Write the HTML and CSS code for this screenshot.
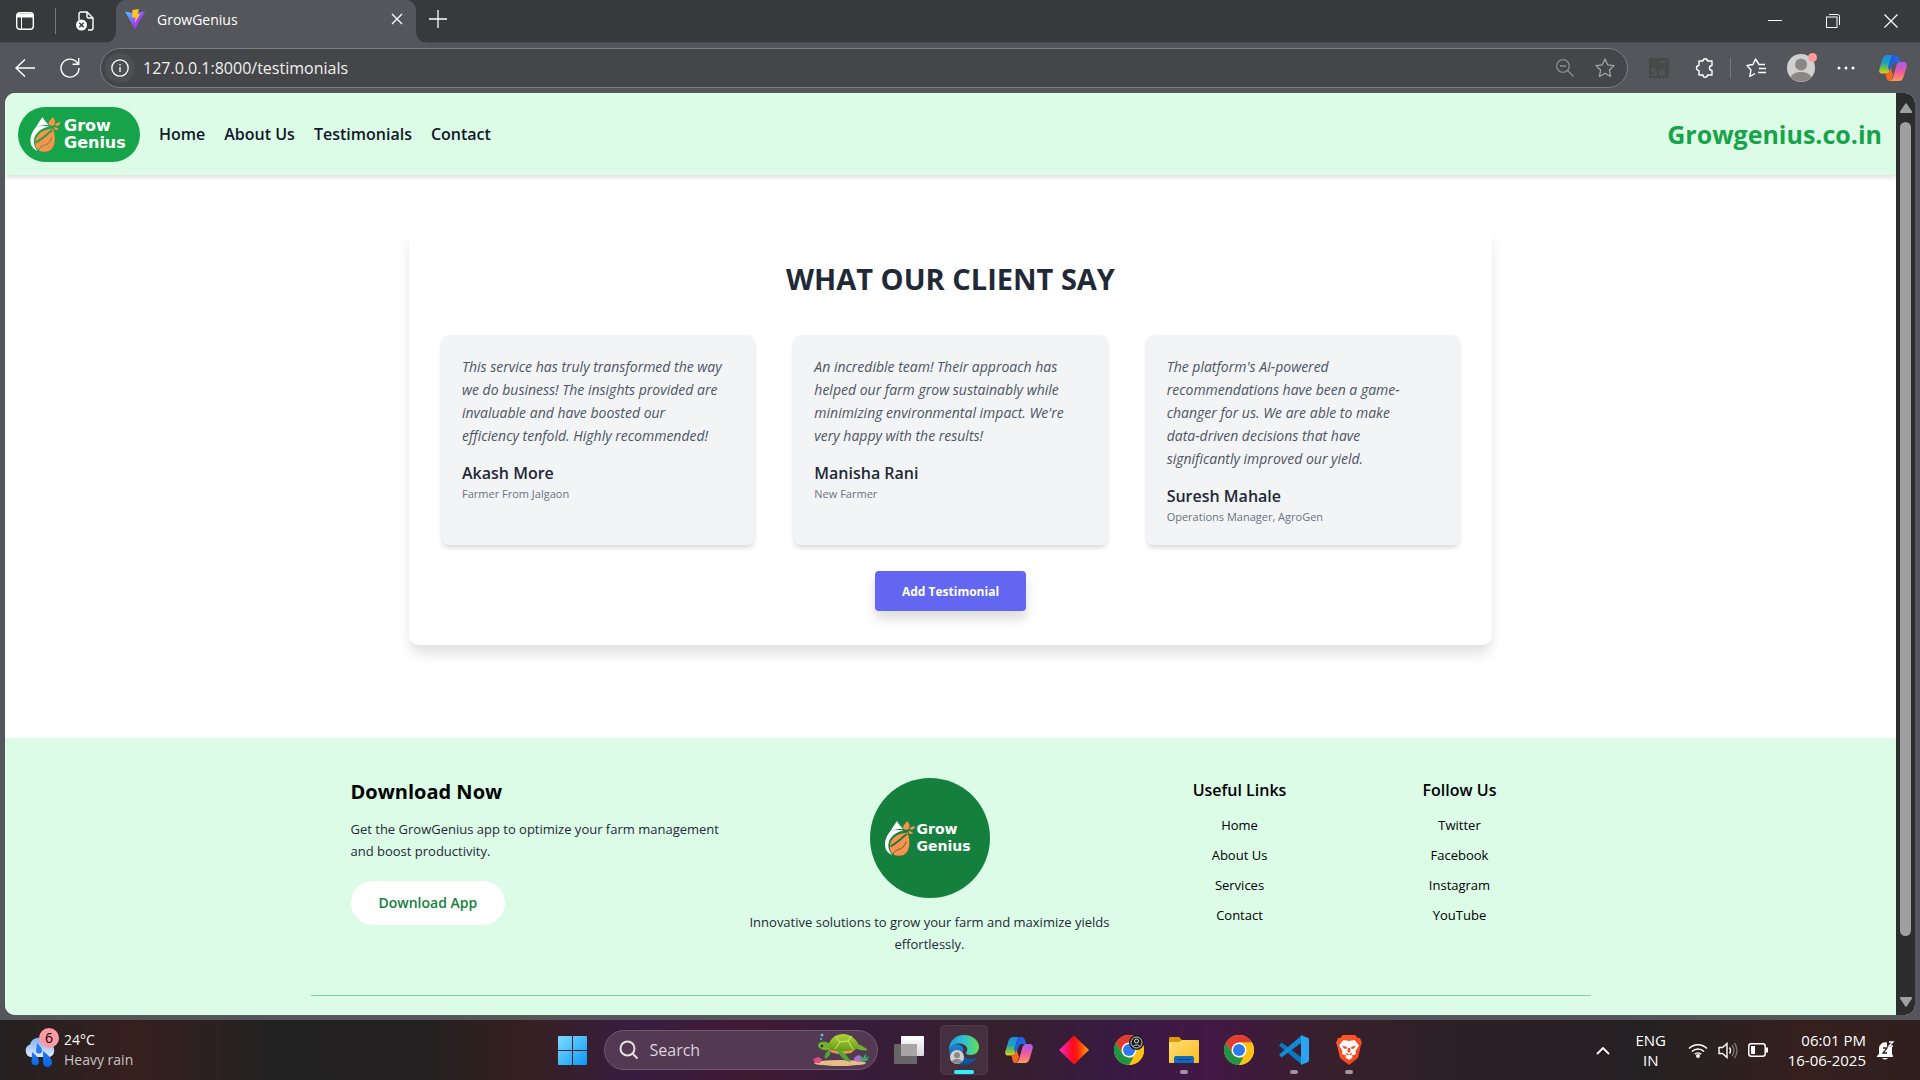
FILE: index.html
```html
<!DOCTYPE html>
<html lang="en">
<head>
<meta charset="utf-8">
<title>GrowGenius</title>
<link rel="stylesheet" href="styles.css">
</head>
<body>
<svg class="defs" aria-hidden="true">
  <defs>
    <linearGradient id="vite-a" x1="0" y1="0" x2="1" y2="1"><stop offset="0" stop-color="#41d1ff"/><stop offset=".6" stop-color="#a23bff"/><stop offset="1" stop-color="#bd34fe"/></linearGradient>
    <linearGradient id="cp-a" x1="0" y1="0" x2="0" y2="1"><stop offset="0" stop-color="#1a8be8"/><stop offset=".45" stop-color="#22a3b8"/><stop offset=".75" stop-color="#7cc43c"/><stop offset="1" stop-color="#f5c518"/></linearGradient>
    <linearGradient id="cp-b" x1="0" y1="0" x2="0" y2="1"><stop offset="0" stop-color="#a55cf6"/><stop offset=".5" stop-color="#ec5aa0"/><stop offset="1" stop-color="#ff9a5a"/></linearGradient>
    <linearGradient id="cp-c" x1="0" y1="0" x2="1" y2="1"><stop offset="0" stop-color="#1b4ed8"/><stop offset="1" stop-color="#2b7de9"/></linearGradient>
    <linearGradient id="win" x1="0" y1="0" x2="1" y2="1"><stop offset="0" stop-color="#7fdcff"/><stop offset="1" stop-color="#0a97f5"/></linearGradient>
    <linearGradient id="edge-a" x1="0" y1="0" x2="1" y2="0"><stop offset="0" stop-color="#1c9be0"/><stop offset=".5" stop-color="#2fc3cf"/><stop offset="1" stop-color="#63e04c"/></linearGradient>
    <linearGradient id="edge-b" x1="0" y1="0" x2="0" y2="1"><stop offset="0" stop-color="#1b88d8"/><stop offset="1" stop-color="#0d4a93"/></linearGradient>
    <linearGradient id="red" x1="0" y1="0" x2="1" y2="0"><stop offset="0" stop-color="#f02bd0"/><stop offset=".45" stop-color="#ff0a1c"/><stop offset=".6" stop-color="#ff1a10"/><stop offset="1" stop-color="#ffa800"/></linearGradient>
    <linearGradient id="fold" x1="0" y1="0" x2="1" y2="1"><stop offset="0" stop-color="#ffdf73"/><stop offset="1" stop-color="#fbbc1e"/></linearGradient>
    <linearGradient id="cloud" x1="0" y1="0" x2="0" y2="1"><stop offset="0" stop-color="#7fb2f5"/><stop offset="1" stop-color="#dfe8f8"/></linearGradient>
    <linearGradient id="drop" x1="0" y1="0" x2="0" y2="1"><stop offset="0" stop-color="#2f86f5"/><stop offset="1" stop-color="#0a64e8"/></linearGradient>
    <linearGradient id="tv" x1="0" y1="0" x2="0" y2="1"><stop offset="0" stop-color="#ffffff"/><stop offset="1" stop-color="#d8d8d8"/></linearGradient>
    <linearGradient id="brave" x1="0" y1="0" x2="1" y2="1"><stop offset="0" stop-color="#ff5a2a"/><stop offset="1" stop-color="#f2401c"/></linearGradient>
    <linearGradient id="shell" x1="0" y1="0" x2="0" y2="1"><stop offset="0" stop-color="#b3d334"/><stop offset="1" stop-color="#5f9a1d"/></linearGradient>
  </defs>
  <symbol id="mark" viewBox="0 0 30 35">
    <path fill="#fff" d="M12 0c1.500 3 4 5.500 6 8-5 0-9 .6-12.500 2.500C7 6.500 10 3.500 12 0z"/>
    <path fill="#fff" d="M5.500 10C1.500 15 0 19 0 23.500 0 28.500 2.500 32 7 34 3 29 2 23 5.500 17.500 8.500 13 13 10.500 19 9.500 14 8.500 9 9 5.500 10z"/>
    <path fill="#ff914d" d="M22.500 11.500C26 22 25 34.500 14 34.800c-4 .1-7-1.800-8.700-4.800C3 20 9 12.500 22.500 11.500z"/>
    <path fill="none" stroke="currentColor" stroke-width="2" d="M5.500 25.500C9 23 12 21.500 14 19.500c3-2.500 5-4.500 8-6.500"/>
    <path fill="none" stroke="currentColor" stroke-width="1" d="M8 33c2-4 5-4 8-5.500 3-1.500 4-4 5-7"/>
    <path fill="#ff914d" d="M18 7c0-3 2.500-4 4-7 2.500 2.500 3.500 5 1.500 8-1.500 1.500-4 1-5.500-1zM24.500 8.500C25.500 5.500 27 5.500 30 5.200c-.5 2.800-2.500 4.300-5.500 3.300zM23 10.500c2.500-.5 4 0 5 2-2 1-4 .5-5-2z"/>
  </symbol>
  <symbol id="copilot" viewBox="0 0 28 26">
    <path fill="url(#cp-a)" d="M8 0h9c-2 1-3 3-4 7l-2.500 9c-.8 2-2 2.500-3.500 2.500H3C1 18.500-.3 17 .3 14.500L3.500 4C4.300 1.500 5.800 0 8 0z"/>
    <path fill="url(#cp-c)" d="M13 0h3.500C19 0 20 2 21 7h-3.500C15.500 7 14 8 13.300 10L11 18l-2-6 2.500-8z"/>
    <path fill="url(#cp-b)" d="M20 26h-9c2-1 3-3 4-7l2.500-9c.8-2 2-3 3.500-3h4c2 0 3.300 2 2.700 4.500L24.500 22c-.8 2.500-2.300 4-4.500 4z"/>
    <path fill="#f7681f" d="M7 18.500c1.700 0 2.800-.6 3.500-2.500l1-3.500L14 20c-1 4-2 6-4 6-2.500 0-2.500-4-3.500-7.500z"/>
  </symbol>
  <symbol id="chrome" viewBox="0 0 30 30">
    <circle cx="15" cy="15" r="15" fill="#fbc116"/>
    <path fill="#e33b2e" d="M15 0a15 15 0 0 1 13 7.500H15L8.500 18.800 2 7.500A15 15 0 0 1 15 0z"/>
    <path fill="#229342" d="M2 7.500l6.500 11.300L15 22.500h6.500L15 30A15 15 0 0 1 2 7.500z"/>
    <path fill="#fbc116" d="M15 7.500h13A15 15 0 0 1 15 30l6.500-11.300z"/>
    <circle cx="15" cy="15" r="7.500" fill="#fff"/><circle cx="15" cy="15" r="6" fill="#2f7bea"/>
  </symbol>
  <symbol id="person" viewBox="0 0 28 28">
    <circle cx="14" cy="14" r="14" fill="#d2d0ce"/><circle cx="14" cy="10.500" r="6" fill="#8a8886"/>
    <path fill="#8a8886" d="M3.500 23C6 19 10 18 14 18s8 1 10.500 5A14 14 0 0 1 3.500 23z"/>
  </symbol>
</svg>

<header class="tabstrip">
  <button class="chrome-btn" aria-label="Tab actions"><svg width="18" height="18" viewBox="0 0 18 18" fill="none" stroke="#fff"><rect x=".7" y=".7" width="16.600" height="16.600" rx="3" stroke-width="1.400"/><path d="M1 3.500h16" stroke-width="4"/><path d="M5.500 5v12"/></svg></button>
  <span class="strip-rule"></span>
  <button class="chrome-btn" aria-label="Workspaces"><svg width="18" height="20" viewBox="0 0 18 20"><path d="M3 9V3a2 2 0 0 1 2-2h6l6 6v10a2 2 0 0 1-2 2h-3M11 1v4.500A1.500 1.500 0 0 0 12.500 7H17" fill="none" stroke="#fff" stroke-width="1.400"/><circle cx="5.500" cy="14" r="5.500" fill="#fff"/><path d="M3.300 11.800l4.400 4.400m0-4.400l-4.400 4.400" stroke="#38393d" stroke-width="1.500"/></svg></button>
  <div class="tab">
    <svg width="20" height="20" viewBox="0 0 20 20"><path fill="url(#vite-a)" d="M0 2.500L8 4l12-1.500L10 20z"/><path fill="#ffc61f" d="M7.500 1L14 0l-1.500 5H15L10 14l.5-5.500H7z"/></svg>
    <span class="tab-title">GrowGenius</span>
    <button class="chrome-btn close" aria-label="Close tab"><svg width="12" height="12" viewBox="0 0 12 12"><path d="M1 1l10 10M11 1L1 11" stroke="#fff" stroke-width="1.300"/></svg></button>
  </div>
  <button class="chrome-btn plus" aria-label="New tab"><svg width="18" height="18" viewBox="0 0 18 18"><path d="M9 0v18M0 9h18" stroke="#fff" stroke-width="1.300"/></svg></button>
  <div class="window-controls">
    <button class="chrome-btn" aria-label="Minimize"><svg width="14" height="14" viewBox="0 0 14 14"><path d="M0 6.500h14" stroke="#fff"/></svg></button>
    <button class="chrome-btn" aria-label="Restore"><svg width="14" height="14" viewBox="0 0 14 14" fill="none" stroke="#fff"><rect x=".5" y="3" width="10.500" height="10.500"/><path d="M3 .5h8.500a2 2 0 0 1 2 2V11"/></svg></button>
    <button class="chrome-btn" aria-label="Close"><svg width="14" height="14" viewBox="0 0 14 14"><path d="M.5.500l13 13M13.500.500l-13 13" stroke="#fff" stroke-width="1.200"/></svg></button>
  </div>
</header>

<div class="toolbar">
  <button class="chrome-btn" aria-label="Back"><svg width="20" height="18" viewBox="0 0 20 18" fill="none" stroke="#fff" stroke-width="1.400"><path d="M20 9H1M10 .5L1 9l9 8.500"/></svg></button>
  <button class="chrome-btn" aria-label="Refresh"><svg width="20" height="20" viewBox="0 0 20 20" fill="none" stroke="#fff" stroke-width="1.400"><path d="M19 10A9 9 0 1 1 15.500 3L18.500 6M18.700 0v6.200H12.500"/></svg></button>
  <div class="address">
    <span class="site-info"><svg width="18" height="18" viewBox="0 0 18 18" fill="none" stroke="#fff" stroke-width="1.300"><circle cx="9" cy="9" r="8.200"/><path d="M9 8v5M9 5v1.500"/></svg></span>
    <input class="url" aria-label="Address" value="127.0.0.1:8000/testimonials">
    <button class="chrome-btn" aria-label="Zoom"><svg width="18" height="18" viewBox="0 0 18 18" fill="none" stroke="#8c8d90" stroke-width="1.300"><circle cx="7" cy="7" r="6.300"/><path d="M11.500 11.500L17.500 17.500M4 7h6"/></svg></button>
    <button class="chrome-btn" aria-label="Add to favourites"><svg width="20" height="20" viewBox="0 0 20 20" fill="none" stroke="#a3a4a7" stroke-width="1.300" stroke-linejoin="round"><path d="M10 1l2.700 5.800 6.300.8-4.600 4.400 1.200 6.500L10 15.300 4.400 18.500 5.600 12 1 7.600l6.300-.8z"/></svg></button>
  </div>
  <div class="extensions">
    <button class="chrome-btn" aria-label="Selenium"><svg width="20" height="20" viewBox="0 0 20 20"><path fill="#494949" d="M0 0h20v20H0z"/><path fill="none" stroke="#5d5f66" d="M11 4h6M7 11H3v3h4v3H2M10 15h5v-3h-4v5h5"/></svg></button>
    <button class="chrome-btn" aria-label="Extensions"><svg width="20" height="20" viewBox="0 0 20 20" fill="none" stroke="#fff" stroke-width="1.400" stroke-linejoin="round"><path d="M4 3h4a2.200 2.200 0 0 1 4.400 0H17v4.500a2.300 2.300 0 0 0 0 5V17h-4.600a2.200 2.200 0 0 1-4.400 0H4v-4.500a2.500 2.500 0 0 1 0-5z"/></svg></button>
    <span class="strip-rule short"></span>
    <button class="chrome-btn" aria-label="Favourites"><svg width="20" height="20" viewBox="0 0 20 20" fill="none" stroke="#fff" stroke-width="1.400" stroke-linejoin="round"><path d="M19 6.500h-6L9.500 1 7 6.500l-6 1L5 12l-1.200 6.500L9 15.500M13 10.500h7M12 14.500h8"/></svg></button>
    <button class="chrome-btn avatar" aria-label="Profile"><svg width="28" height="28"><use href="#person"/></svg><span class="avatar-dot"></span></button>
    <button class="chrome-btn" aria-label="More"><svg width="18" height="4" viewBox="0 0 18 4" fill="#fff"><circle cx="2" cy="2" r="1.500"/><circle cx="9" cy="2" r="1.500"/><circle cx="16" cy="2" r="1.500"/></svg></button>
    <button class="chrome-btn copilot" aria-label="Copilot"><svg width="28" height="26"><use href="#copilot"/></svg></button>
  </div>
</div>

<div class="viewport">
  <div class="site">
    <nav class="navbar">
      <a class="logo-pill" href="#"><svg width="35" height="35"><use href="#mark"/></svg><span class="logo-text">Grow<br>Genius</span></a>
      <a href="#">Home</a><a href="#">About Us</a><a href="#">Testimonials</a><a href="#">Contact</a>
      <a class="brand" href="#">Growgenius.co.in</a>
    </nav>
    <main class="main">
      <section class="panel">
        <h1>WHAT OUR CLIENT SAY</h1>
        <div class="cards">
          <article class="card">
            <p class="quote">This service has truly transformed the way we do business! The insights provided are invaluable and have boosted our <span class="keep">efficiency tenfold.</span> Highly recommended!</p>
            <h2>Akash More</h2><p class="role">Farmer From Jalgaon</p>
          </article>
          <article class="card">
            <p class="quote">An incredible team! Their approach has helped our farm grow sustainably while minimizing environmental impact. We're very happy with the results!</p>
            <h2>Manisha Rani</h2><p class="role">New Farmer</p>
          </article>
          <article class="card">
            <p class="quote">The platform's AI-powered recommendations have been a game-changer for us. We are able to make <span class="keep">data-driven</span> decisions that have <span class="keep">significantly improved</span> our yield.</p>
            <h2>Suresh Mahale</h2><p class="role">Operations Manager, AgroGen</p>
          </article>
        </div>
        <button class="add">Add Testimonial</button>
      </section>
    </main>
    <footer class="footer">
      <div class="footer-grid">
        <div class="download">
          <h2>Download Now</h2>
          <p>Get the GrowGenius app to optimize your farm management and boost productivity.</p>
          <button class="download-btn">Download App</button>
        </div>
        <div class="about">
          <div class="logo-circle"><svg width="30" height="35"><use href="#mark"/></svg><span class="logo-text">Grow<br>Genius</span></div>
          <p>Innovative solutions to grow your farm and maximize yields effortlessly.</p>
        </div>
        <div class="links"><h3>Useful Links</h3><a href="#">Home</a><a href="#">About Us</a><a href="#">Services</a><a href="#">Contact</a></div>
        <div class="links"><h3>Follow Us</h3><a href="#">Twitter</a><a href="#">Facebook</a><a href="#">Instagram</a><a href="#">YouTube</a></div>
      </div>
    </footer>
  </div>
  <div class="scrollbar">
    <svg width="14" height="11" viewBox="0 0 14 11"><path fill="#9f9f9f" d="M6 1q1-1.500 2 0l5 7.500q.7 1.500-1 1.500H2q-1.700 0-1-1.500z"/></svg>
    <div class="track"><div class="thumb"></div></div>
    <svg width="14" height="11" viewBox="0 0 14 11"><path fill="#9f9f9f" d="M6 10q1 1.500 2 0l5-7.500q.7-1.500-1-1.500H2q-1.700 0-1 1.500z"/></svg>
  </div>
</div>

<div class="taskbar">
  <div class="weather">
    <div class="weather-icon">
      <svg width="32" height="34" viewBox="0 0 32 34"><path fill="url(#cloud)" d="M7 22a6.500 6.500 0 0 1-1-12.500A9.500 9.500 0 0 1 23 7a8 8 0 0 1 3 15z"/><path fill="url(#drop)" d="M13 8c3 3 5 5 5 7.500a3 3 0 0 1-6 0zM8 17c4 3 7 6 7 10a3.800 3.800 0 0 1-7.500 0zM19 16c5 4 9 7 9 11.500a4.500 4.500 0 0 1-9 0z"/></svg>
      <span class="badge">6</span>
    </div>
    <div class="weather-text"><span>24°C</span><span class="muted">Heavy rain</span></div>
  </div>
  <div class="apps">
    <button class="app" aria-label="Start"><svg width="29" height="29" viewBox="0 0 29 29" fill="url(#win)"><path d="M1 0h13v14H0V1a1 1 0 0 1 1-1zM15 0h13a1 1 0 0 1 1 1v13H15zM0 15h14v14H1a1 1 0 0 1-1-1zM15 15h14v13a1 1 0 0 1-1 1H15z"/></svg></button>
    <label class="search">
      <svg width="20" height="20" viewBox="0 0 20 20" fill="none" stroke="#e6dfe4" stroke-width="2"><circle cx="8.500" cy="8.500" r="7"/><path d="M13.500 13.500l5 5"/></svg>
      <input placeholder="Search" aria-label="Search">
      <svg width="56" height="34" viewBox="0 0 56 34">
        <ellipse cx="27" cy="30" rx="26" ry="3" fill="#e6bd86"/>
        <path fill="#6fb32c" d="M5 13c0-4 4-5 8-4 3 1 5 4 4 7-3 2-9 2-12-3zM44 11c5 1 8 4 11 6-4 1-9 0-13-2z"/>
        <path fill="#e89a3a" d="M14 15c8 4 20 4 30 0l-6 5c-8 2-16 1-20-1z"/>
        <path fill="url(#shell)" d="M14 14C18 4 24 1 30 1c8 0 14 6 17 13-8 5-24 6-33 0z"/>
        <path fill="none" stroke="#d8e66a" d="M22 3l5 6 8-1 5 8M27 9l-5 7M35 8l4-5"/>
        <path fill="#4fa53a" d="M24 16c6 2 11 7 14 13-6-1-12-5-14-13zM16 17c3 1 2 6-4 9-1-4 1-7 4-9z"/>
        <circle cx="9" cy="13" r="1.200" fill="#222"/><circle cx="9" cy="2" r="1.500" fill="#5ab8e8"/><circle cx="8" cy="6" r="1" fill="#5ab8e8"/>
        <path fill="#e04a86" d="M0 26l3-1 2-1 4 2-2 4H2z"/><path fill="#b06ad0" d="M41 25l4-3 4 2 1 4-5 1-4-2z"/><path fill="#36a868" d="M48 28l-1-6 3 3 3-5v5l3-2-2 5z"/>
      </svg>
    </label>
    <button class="app" aria-label="Task view"><svg width="30" height="28" viewBox="0 0 30 28"><rect y="8" width="23" height="20" rx="1" fill="#666"/><rect x="7" width="23" height="20" rx="1" fill="url(#tv)"/><path fill="#a9a4a6" d="M7 8h16v12H7z"/></svg></button>
    <button class="app active" aria-label="Edge"><svg width="30" height="30" viewBox="0 0 30 30"><path fill="url(#edge-b)" d="M0 15C0 10 6 8 11 10c3 1.500 4 4 3 6-2 4 2 8 7 8 3 0 5-1 7-2-3 5-8 8-13 8C6 30 0 23 0 15z"/><path fill="url(#edge-a)" d="M0 14C0 6 7 0 15 0c9 0 15 6 15 12 0 5-4 8-8 8-3 0-5-1-5-2 0-1 2-2 1-5C16 8 5 6 0 14z"/><g transform="translate(1 15) scale(.5)"><use href="#person" width="28" height="28"/></g></svg><span class="run on"></span></button>
    <button class="app" aria-label="Copilot"><svg width="28" height="26"><use href="#copilot"/></svg></button>
    <button class="app" aria-label="Diamond"><svg width="30" height="30" viewBox="0 0 30 30"><path fill="url(#red)" d="M15 0.500L30 15 15 29.500 0 15z"/></svg></button>
    <button class="app" aria-label="Chrome profile"><svg width="30" height="30" viewBox="0 0 30 30"><use href="#chrome"/><circle cx="22.500" cy="7.500" r="7.500" fill="#1c1c1c"/><circle cx="22.500" cy="7.500" r="5.500" fill="none" stroke="#ccc"/><circle cx="22.500" cy="6" r="2" fill="none" stroke="#ddd"/><path d="M19 11.500c1-2 6-2 7 0" fill="none" stroke="#ddd"/></svg></button>
    <button class="app" aria-label="File Explorer"><svg width="30" height="26" viewBox="0 0 30 26"><path fill="#dc9a06" d="M0 1a1 1 0 0 1 1-1h9l3 3h13v6H0z"/><path fill="url(#fold)" d="M0 5h10l3-2h16a1 1 0 0 1 1 1v21a1 1 0 0 1-1 1H1a1 1 0 0 1-1-1z"/><path fill="#0f6cbd" d="M5 26v-5a2 2 0 0 1 2-2h16a2 2 0 0 1 2 2v5z"/><path stroke="#0a3f78" d="M8 22.500h14"/></svg><span class="run"></span></button>
    <button class="app" aria-label="Chrome"><svg width="30" height="30"><use href="#chrome"/></svg></button>
    <button class="app" aria-label="Visual Studio Code"><svg width="30" height="30" viewBox="0 0 30 30"><path fill="#0b78c4" d="M22 22v7L0 10.500 2.500 7.500z"/><path fill="#1389d8" d="M0 19.500L22 1v7L2.500 22.500z"/><path fill="#2ba4f2" d="M22 0l7 3a1.500 1.500 0 0 1 1 1.500v21a1.500 1.500 0 0 1-1 1.500l-7 3z"/></svg><span class="run"></span></button>
    <button class="app" aria-label="Brave"><svg width="26" height="30" viewBox="0 0 26 30"><path fill="url(#brave)" d="M7 0h12l3 3 2 0 2 5-1 2-3 13-9 7-9-7L1 10 0 8l2-5h2z"/><path fill="#fff" d="M7.500 5l5.500 1 5.500-1L23 10.500 19.500 16l.5 3-4 1.500.5 2L13 25l-3.500-2.500.5-2L6 19l.5-3L3 10.500z"/><path fill="#f4481f" d="M6 10.500l5 1.500-.5 2-2.500-.5zM20 10.500L15 12l.5 2 2.500-.5zM12 13h2l.6 3.500L13 18l-1.600-1.500zM9.500 17.500L13 19.500l3.500-2-1.500 3-2-1-2 1z"/></svg><span class="run"></span></button>
  </div>
  <div class="tray">
    <svg width="14" height="9" viewBox="0 0 14 9"><path d="M1 8l6-6 6 6" fill="none" stroke="#fff" stroke-width="1.800"/></svg>
    <div class="lang"><span>ENG</span><span>IN</span></div>
    <div class="status">
      <svg width="20" height="16" viewBox="0 0 20 16" fill="none" stroke="#fff" stroke-width="1.500"><path d="M1 6.500a12.500 12.500 0 0 1 18 0M4 9.500a8.500 8.500 0 0 1 12 0M6.800 12.200a4.600 4.600 0 0 1 6.400 0"/><circle cx="10" cy="14" r="1.200" fill="#fff"/></svg>
      <svg width="20" height="17" viewBox="0 0 20 17" fill="none" stroke="#fff" stroke-width="1.400"><path d="M1 5.500h3.500L9 1.500v14l-4.500-4H1zM11.500 5.500q2 3 0 6"/><path stroke="#7d7376" d="M14 3q4 5.500 0 11M16.500 1q5 7.500 0 15"/></svg>
      <svg width="20" height="14" viewBox="0 0 20 14"><rect x=".8" y=".8" width="16.400" height="12.400" rx="2.500" fill="none" stroke="#fff" stroke-width="1.500"/><path fill="#fff" d="M3 3h4v8H3zM18 4.500h2v5h-2z"/></svg>
    </div>
    <div class="clock"><span>06:01 PM</span><span>16-06-2025</span></div>
    <svg width="18" height="19" viewBox="0 0 18 19"><path fill="#fff" d="M2 13V7.500A6.500 6.500 0 0 1 10 1.500V6h5v7l1 2v1H0v-1zM5 17h6q-3 3-6 0z"/><path d="M12 1h4l-4 4h4" fill="none" stroke="#fff" stroke-width="1.300"/><path d="M6 7h4l-4 5h4" fill="none" stroke="#302020" stroke-width="1.300"/></svg>
  </div>
</div>
</body>
</html>
```
FILE: styles.css
```css
* { box-sizing: border-box; margin: 0; padding: 0; }
body {
  display: flex; flex-direction: column; height: 100vh; overflow: hidden;
  font-family: "Open Sans", "Noto Sans", sans-serif; font-size: 14px;
  background: #55565b; color: #1f2937;
}
button, input { font: inherit; color: inherit; border: 0; background: none; outline: 0; }
a { color: inherit; text-decoration: none; }
svg { display: block; flex: none; }
.defs { position: absolute; width: 0; height: 0; }

.chrome-btn { display: flex; align-items: center; justify-content: center; width: 40px; height: 40px; flex: none; }
.strip-rule { width: 1px; height: 26px; background: #77787c; }
.strip-rule.short { height: 20px; }

.tabstrip { display: flex; align-items: center; height: 43px; padding-left: 5px; background: #38393d; border-bottom: 1px solid #4a4b4f; color: #fff; }
.tabstrip > .strip-rule { margin: 0 9px 0 10px; }
.tab {
  display: flex; align-items: center; gap: 12px; width: 300px; height: 43px; margin-left: 11px; padding: 0 0 4px 9px;
  border-radius: 10px 10px 0 0; background: #55565b; position: relative;
}
.tab::before, .tab::after { content: ""; position: absolute; bottom: 0; width: 10px; height: 10px; }
.tab::before { left: -10px; background: radial-gradient(circle at 0 0, transparent 9px, #55565b 10px); }
.tab::after { right: -10px; background: radial-gradient(circle at 100% 0, transparent 9px, #55565b 10px); }
.tab-title { flex: 1; }
.close { width: 38px; }
.plus { margin: 0 0 4px 2px; }
.window-controls { display: flex; margin-left: auto; }
.window-controls .chrome-btn { width: 58px; }

.toolbar { display: flex; align-items: center; height: 50px; padding: 0 3px 0 5px; flex: none; }
.toolbar > .chrome-btn { margin-right: 5px; }
.address { display: flex; align-items: center; flex: 1; height: 40px; margin-left: 5px; padding: 0 2px 0 4px; border: 1px solid #7b7c80; border-radius: 20px; background: #454649; }
.site-info { display: flex; align-items: center; justify-content: center; width: 30px; height: 30px; border-radius: 50%; background: #4e4f53; }
.url { flex: 1; min-width: 0; margin-left: 8px; color: #f0f0f0; font-size: 16px; }
.extensions { display: flex; align-items: center; margin-left: 8px; }
.extensions .chrome-btn { width: 46px; }
.extensions .strip-rule { margin: 0 2px; }
.extensions .chrome-btn.avatar { position: relative; width: 44px; }
.avatar-dot { position: absolute; top: 5px; right: 6px; width: 9px; height: 9px; border-radius: 50%; background: #ff9d9d; }
.extensions .chrome-btn.copilot { width: 48px; }

.viewport { display: flex; flex: 1; min-height: 0; margin: 0 5px 5px; border-radius: 10px; overflow: hidden; background: #fff; }
.site { flex: 1; display: flex; flex-direction: column; min-width: 0; }
.scrollbar { display: flex; flex-direction: column; align-items: center; gap: 8px; width: 19px; padding: 10px 0 8px; background: #2c2c2c; }
.track { flex: 1; }
.thumb { width: 11px; height: 94%; border-radius: 6px; background: #9f9f9f; }

.navbar { display: flex; align-items: center; gap: 19px; height: 82px; padding: 0 14px 0 13px; flex: none; background: #dcfce7; box-shadow: 0 2px 5px rgba(0, 0, 0, .15); color: #111827; font-size: 16px; font-weight: 600; }
.logo-pill { display: flex; align-items: center; gap: 1px; width: 122px; height: 55px; padding-left: 10px; border-radius: 28px; background: #16a34a; color: #16a34a; }
.logo-text { color: #fff; font: bold 16px/17px "DejaVu Sans", sans-serif; text-align: left; }
.brand { margin-left: auto; color: #16a34a; font-size: 25px; font-weight: 700; }

.main { padding: 52px 24px 93px; }
.panel { max-width: 1083px; margin: 0 auto; padding: 32px 33px 34px; border-radius: 10px; background: #fff; box-shadow: 0 10px 14px -2px rgba(0, 0, 0, .13); text-align: center; }
.panel h1 { margin-bottom: 36px; font-size: 29px; line-height: 40px; font-weight: 700; }
.cards { display: grid; grid-template-columns: repeat(3, 1fr); gap: 40px; text-align: left; }
.card { min-height: 210px; padding: 20px; border-radius: 7px; background: #f3f4f6; box-shadow: 0 3px 5px rgba(0, 0, 0, .14); }
.quote { margin-bottom: 14px; color: #4b5563; font-style: italic; line-height: 23px; }
.keep { white-space: nowrap; }
.card h2 { font-size: 16px; line-height: 24px; font-weight: 600; }
.role { color: #6b7280; font-size: 11px; line-height: 17px; }
.add { height: 40px; margin-top: 26px; padding: 0 27px; border-radius: 4px; background: #6366f1; box-shadow: 0 8px 12px rgba(0, 0, 0, .14); color: #fff; font-size: 12px; font-weight: 700; }

.footer { flex: 1; background: #dcfce7; color: #1f2937; font-size: 13px; line-height: 22px; }
.footer-grid { display: grid; grid-template-columns: 379fr 400fr 220fr 220fr; max-width: 1280px; height: 258px; margin: 0 auto; padding: 40px 21px 0 40px; border-bottom: 1px solid #7dd3a0; }
.footer h2 { margin-bottom: 12px; color: #000; font-size: 20px; line-height: 28px; font-weight: 700; }
.download p { max-width: 372px; }
.download-btn { height: 44px; margin-top: 19px; padding: 0 28px; border-radius: 22px; background: #fff; color: #15803d; font-size: 14px; font-weight: 600; }
.about { display: flex; flex-direction: column; align-items: center; gap: 13px; padding: 0 15px; text-align: center; }
.logo-circle { display: flex; align-items: center; gap: 2px; width: 120px; height: 120px; padding-left: 15px; border-radius: 50%; background: #15803d; color: #15803d; }
.logo-circle .logo-text { font-size: 14px; }
.links { display: flex; flex-direction: column; align-items: center; gap: 8px; color: #000; }
.links h3 { margin-bottom: 4px; font-size: 16px; line-height: 24px; font-weight: 600; }

.taskbar {
  display: grid; grid-template-columns: 1fr auto 1fr; align-items: center; height: 60px; flex: none; color: #fff; font-size: 14px; line-height: 20px;
  background: linear-gradient(90deg, #242021 0, #36201e 7%, #232223 14%, #232122 22%, #35201e 27%, #381d40 33%, #3f1a33 39%, #371c3a 45%, #36202c 52%, #381a42 58%, #421845 63%, #37202b 69%, #2c2027 76%, #252123 86%, #35201d 94%, #301f1f 100%);
}
.weather { display: flex; align-items: center; gap: 8px; padding-left: 24px; }
.weather-icon { position: relative; padding-top: 4px; }
.badge { position: absolute; top: -3px; left: 15px; width: 20px; height: 20px; border-radius: 50%; background: #ff99a4; color: #000; text-align: center; }
.weather-text, .lang, .clock { display: flex; flex-direction: column; }
.muted { color: #c9c4c4; }
.apps { display: flex; align-items: center; gap: 7px; padding-left: 1px; }
.app { display: flex; align-items: center; justify-content: center; width: 48px; height: 50px; border-radius: 5px; position: relative; }
.app.active { background: rgba(255, 255, 255, .08); border: 1px solid rgba(255, 255, 255, .06); }
.run { position: absolute; bottom: 1px; width: 8px; height: 4px; border-radius: 2px; background: #a392a3; }
.run.on { bottom: 0; width: 20px; background: #2ff0ff; }
.search { display: flex; align-items: center; width: 274px; height: 40px; padding: 0 8px 0 14px; border: 1px solid #6f5a70; border-radius: 20px; background: #533a52; }
.search input { flex: 1; min-width: 0; padding-left: 11px; font-size: 16px; }
.search input::placeholder { color: #ddd3da; opacity: 1; }
.tray { display: flex; align-items: center; justify-content: flex-end; padding-right: 25px; font-size: 15px; }
.lang { width: 48px; margin: 0 13px 0 17px; text-align: center; }
.status { display: flex; align-items: center; gap: 10px; margin-right: 20px; }
.clock { margin-right: 11px; text-align: right; }
```
